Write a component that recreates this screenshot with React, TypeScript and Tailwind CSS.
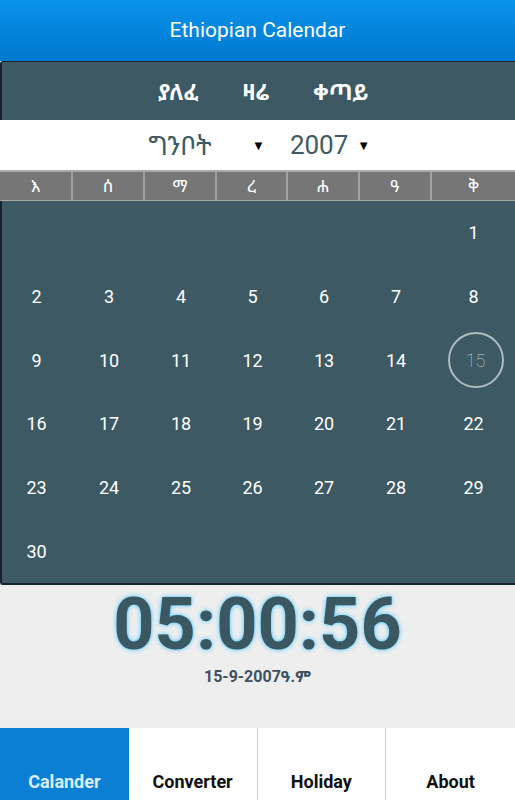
import React from "react";

const ETH = '"Noto Sans Ethiopic", "Abyssinica SIL", "Noto Sans", "DejaVu Sans", sans-serif';

const weekdays = ["እ", "ሰ", "ማ", "ረ", "ሐ", "ዓ", "ቅ"];

export default function App() {
  const cells: (number | null)[] = [null, null, null, null, null, null];
  for (let d = 1; d <= 30; d++) cells.push(d);
  while (cells.length < 42) cells.push(null);

  return (
    <div
      className="w-[515px] h-[800px] bg-[#eeeeee] flex flex-col overflow-hidden"
      style={{ fontFamily: 'Roboto, "Liberation Sans", sans-serif' }}
    >
      {/* Header */}
      <div className="h-[61px] shrink-0 bg-gradient-to-b from-[#0b93ea] to-[#0078cf] flex items-center justify-center">
        <span className="text-white text-[21px]">Ethiopian Calendar</span>
      </div>

      {/* Calendar panel */}
      <div className="h-[524px] shrink-0 bg-[#3d5a64] border-l-2 border-b-2 border-t border-[#15232a] rounded-bl-[3px] rounded-tl-[3px] flex flex-col">
        <div
          className="h-[58px] shrink-0 flex items-center justify-center gap-[44px] text-white text-[22px] font-bold pl-[10px]"
          style={{ fontFamily: ETH }}
        >
          <span>ያለፈ</span>
          <span>ዛሬ</span>
          <span>ቀጣይ</span>
        </div>
        <div className="h-[50px] shrink-0 bg-white flex items-center text-[#3d5a64] text-[26px] -ml-[2px]">
          <span className="w-[142px] shrink-0" />
          <span className="w-[76px] shrink-0 text-center" style={{ fontFamily: ETH }}>ግንቦት</span>
          <span className="ml-[34px] text-black text-[13px] pt-[2px]">▼</span>
          <span className="ml-[25px]">2007</span>
          <span className="ml-[9px] text-black text-[13px] pt-[2px]">▼</span>
        </div>
        <div className="h-[31px] shrink-0 grid grid-cols-[73px_72px_72px_71px_72px_72px_1fr] bg-[#767676] border-t-2 border-b border-[#a9a9a9] -ml-[2px]">
          {weekdays.map((w, i) => (
            <div
              key={i}
              className={`flex items-center justify-center text-white text-[17px] ${i < 6 ? "border-r-2 border-[#a2a2a2]" : ""}`}
              style={{ fontFamily: ETH }}
            >
              {w}
            </div>
          ))}
        </div>
        <div className="flex-1 grid grid-cols-[73px_72px_72px_71px_72px_72px_1fr] grid-rows-6 -ml-[2px]">
          {cells.map((d, i) => (
            <div key={i} className="flex items-center justify-center">
              {d === 15 ? (
                <div className="w-[56px] h-[56px] ml-[4px] rounded-full border-2 border-[#aebcc0] flex items-center justify-center text-[#c8d2d5] text-[18px]">
                  <span style={{ fontFamily: 'Roboto, sans-serif', fontWeight: 100 }}>15</span>
                </div>
              ) : d ? (
                <span className="text-white text-[18px]">{d}</span>
              ) : null}
            </div>
          ))}
        </div>
      </div>

      {/* Clock */}
      <div className="flex flex-col items-center">
        <div
          className="text-[72px] font-bold leading-none text-[#3a5762] mt-[3px] h-[74px] flex items-center"
          style={{ textShadow: "0 0 5px #4fcbff, 0 0 2px #8fe0ff" }}
        >
          05:00:56
        </div>
        <div className="text-[16px] leading-[18px] font-bold text-[#3d5260] mt-[6px]" style={{ fontFamily: 'Roboto, "Noto Sans Ethiopic", "Noto Sans", sans-serif' }}>
          15-9-2007ዓ.ም
        </div>
      </div>

      <div className="flex-1" />

      {/* Tabs */}
      <div className="h-[72px] shrink-0 grid grid-cols-4 bg-white">
        <div className="bg-[#0a7fd3] flex items-end justify-center pb-[5px] text-[#dbeeff] text-[18px] font-bold">
          Calander
        </div>
        <div className="flex items-end justify-center pb-[5px] text-[#111] text-[18px] font-bold border-r border-[#cfcfcf]">
          Converter
        </div>
        <div className="flex items-end justify-center pb-[5px] text-[#111] text-[18px] font-bold border-r border-[#cfcfcf]">
          Holiday
        </div>
        <div className="flex items-end justify-center pb-[5px] text-[#111] text-[18px] font-bold">
          About
        </div>
      </div>
    </div>
  );
}
